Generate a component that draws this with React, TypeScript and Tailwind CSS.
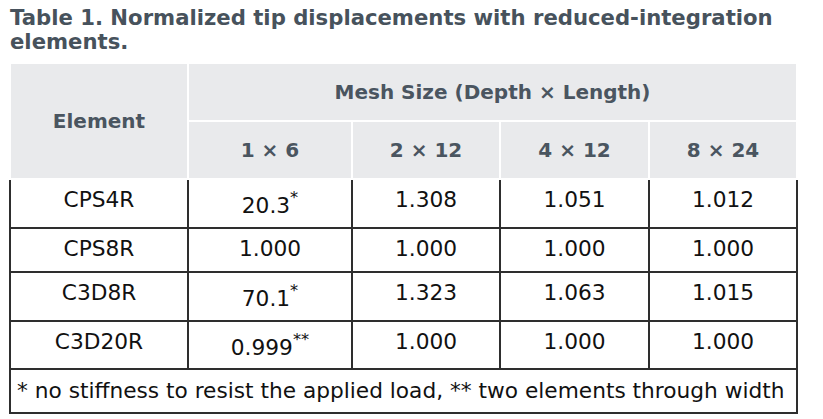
const cols = "grid grid-cols-[176px_162px_146px_147px_146px]";

const rows: { name: string; h: string; vals: [string, string?][] }[] = [
  { name: "CPS4R", h: "h-[47px]", vals: [["20.3", "*"], ["1.308"], ["1.051"], ["1.012"]] },
  { name: "CPS8R", h: "h-[42px]", vals: [["1.000"], ["1.000"], ["1.000"], ["1.000"]] },
  { name: "C3D8R", h: "h-[47px]", vals: [["70.1", "*"], ["1.323"], ["1.063"], ["1.015"]] },
  { name: "C3D20R", h: "h-[46px]", vals: [["0.999", "**"], ["1.000"], ["1.000"], ["1.000"]] },
];

export default function App() {
  return (
    <div className="h-[419px] w-[823px] overflow-hidden bg-white font-['DejaVu_Sans',Verdana,sans-serif]">
      <h1 className="w-[800px] pl-[10px] pt-[6px] text-[21.2px] font-bold leading-[24px] text-[#47525c]">
        Table 1. Normalized tip displacements with reduced-integration elements.
      </h1>

      <div className="ml-[9px] mt-[10px] w-[789px]">
        {/* header */}
        <div className={`${cols} grid-rows-[56px_56px] gap-[2px] pl-[2px] text-[20px] font-bold text-[#4a5560]`}>
          <div className="row-span-2 flex items-center justify-center bg-[#e9eaec]">Element</div>
          <div className="col-span-4 flex items-center justify-center bg-[#e9eaec]">
            Mesh Size (Depth × Length)
          </div>
          {["1 × 6", "2 × 12", "4 × 12", "8 × 24"].map((m) => (
            <div key={m} className="flex items-center justify-center bg-[#e9eaec]">
              {m}
            </div>
          ))}
        </div>

        {/* body */}
        <div className="mt-[2px] bg-[#2e2e2e] px-[2px] pb-[2px] text-[21.7px] leading-[26px] text-[#111]">
          {rows.map((r) => (
            <div key={r.name} className={`${cols} ${r.h} mb-[2px] gap-x-[2px]`}>
              <div className="bg-white pt-[7px] text-center">{r.name}</div>
              {r.vals.map(([v, s], i) => (
                <div key={i} className={`bg-white text-center ${s ? "pt-[13px]" : "pt-[7px]"}`}>
                  {v}
                  {s && <sup className="-top-[0.6em]">{s}</sup>}
                </div>
              ))}
            </div>
          ))}
          <div className="flex h-[42px] items-center bg-white pl-[6px]">
            * no stiffness to resist the applied load, ** two elements through width
          </div>
        </div>
      </div>
    </div>
  );
}
